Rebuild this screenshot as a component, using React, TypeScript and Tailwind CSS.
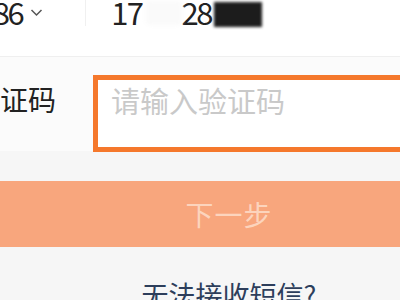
export default function App() {
  return (
    <div className="w-[400px] h-[300px] overflow-hidden bg-[#f6f6f6] font-['Noto_Sans_CJK_SC','Noto_Sans',sans-serif]">
      {/* phone row */}
      <div className="h-[57px] bg-white border-b border-[#efefef] flex items-start">
        <div className="flex items-start ml-[-22px] mt-[-3px]">
          <span className="text-[31px] leading-[30px] text-[#222222] tracking-[-2.5px]">+86</span>
          <svg className="ml-[8px] mt-[11px]" width="13" height="9" viewBox="0 0 13 9" fill="none">
            <path d="M1.5 2 L6.5 7 L11.5 2" stroke="#555555" strokeWidth="1.5" />
          </svg>
        </div>
        <div className="ml-[42px] w-px h-[26px] bg-[#f0f0f0]" />
        <div className="ml-[25px] flex items-start mt-[-3px]">
          <span className="text-[31px] leading-[30px] text-[#222222] tracking-[-1.5px]">17</span>
          <span className="ml-[3px] mt-[4px] w-[36px] h-[24px] rounded-[4px] bg-[#fafafa] blur-[2px]" />
          <span className="ml-[0px] text-[31px] leading-[30px] text-[#222222] tracking-[-2.5px]">28</span>
          <span className="ml-[3px] mt-[5px] w-[48px] h-[25px] bg-[#1c1c1c] blur-[1.5px]" />
        </div>
      </div>

      {/* code row */}
      <div className="h-[94px] bg-[#fbfbfb] flex items-start pt-[18px]">
        <span className="w-[93px] pt-[10px] text-[28px] leading-none text-[#222222] ml-[-28px]">
          验证码
        </span>
        <div className="ml-[28px] flex-1 h-[77px] border-[5px] border-r-0 border-[#f5782c] bg-white pl-[13px] pt-[6px] mr-[-10px]">
          <span className="text-[29px] leading-none text-[#c9c9c9]">请输入验证码</span>
        </div>
      </div>

      {/* next button */}
      <div className="mt-[30px] h-[66px] bg-[#f8a67d] flex items-center justify-center pl-[58px]">
        <span className="text-[28px] leading-none text-[#fcd4bd] tracking-[1px]">下一步</span>
      </div>

      {/* help link */}
      <div className="mt-[34px] flex justify-center pl-[58px]">
        <span className="text-[27px] leading-none text-[#2d3e5b]">无法接收短信?</span>
      </div>
    </div>
  );
}
